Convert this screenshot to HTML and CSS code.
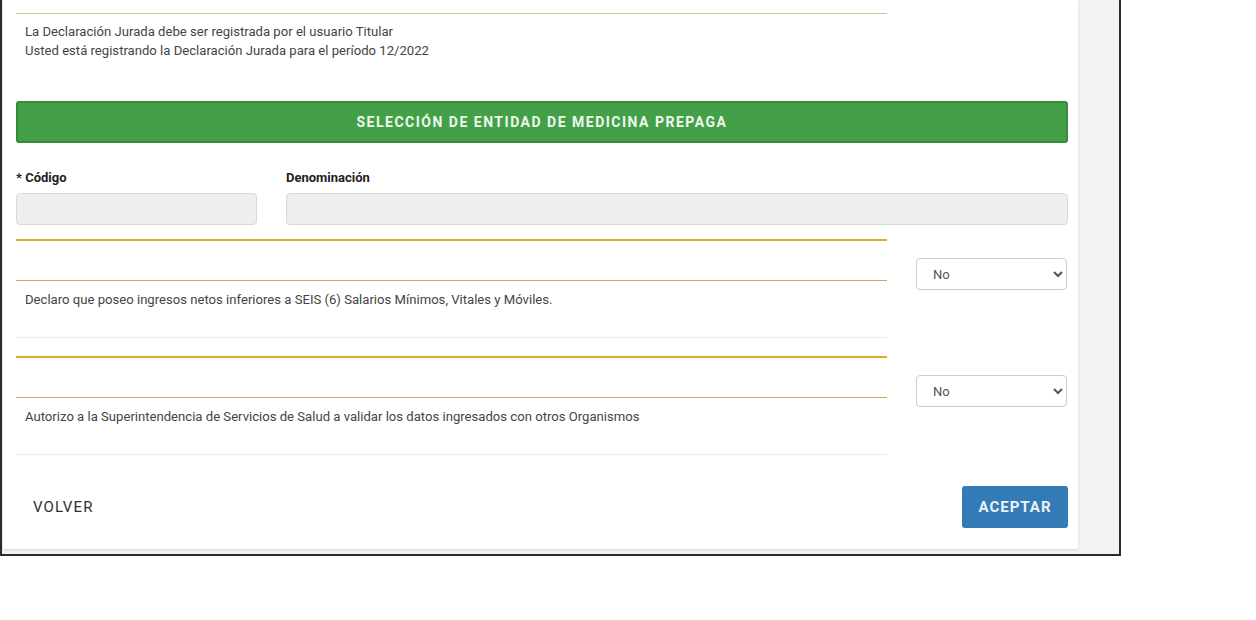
FILE: index.html
```html
<!DOCTYPE html>
<html lang="es">
<head>
<meta charset="utf-8">
<title>Declaración Jurada</title>
<link rel="stylesheet" href="styles.css">
</head>
<body>
<div class="frame">
  <div class="card">
    <div class="intro">
      <p>La Declaración Jurada debe ser registrada por el usuario Titular</p>
      <p>Usted está registrando la Declaración Jurada para el período 12/2022</p>
    </div>

    <div class="banner">SELECCIÓN DE ENTIDAD DE MEDICINA PREPAGA</div>

    <div class="fields">
      <div class="field">
        <label class="label">* Código</label>
        <input class="input" type="text" disabled>
      </div>
      <div class="field">
        <label class="label">Denominación</label>
        <input class="input" type="text" disabled>
      </div>
    </div>

    <div class="decl">
      <div class="decl-text">
        <div class="decl-head"></div>
        <p class="decl-body">Declaro que poseo ingresos netos inferiores a SEIS (6) Salarios Mínimos, Vitales y Móviles.</p>
      </div>
      <div class="decl-select">
        <select class="select"><option>No</option><option>Si</option></select>
      </div>
    </div>

    <div class="decl">
      <div class="decl-text">
        <div class="decl-head"></div>
        <p class="decl-body">Autorizo a la Superintendencia de Servicios de Salud a validar los datos ingresados con otros Organismos</p>
      </div>
      <div class="decl-select">
        <select class="select"><option>No</option><option>Si</option></select>
      </div>
    </div>

    <div class="actions">
      <button class="btn-link" type="button">VOLVER</button>
      <button class="btn-primary" type="button">ACEPTAR</button>
    </div>
  </div>
</div>
</body>
</html>
```

FILE: styles.css
```css
* { box-sizing: border-box; }

html, body {
  margin: 0;
  padding: 0;
  background: #ffffff;
  font-family: Roboto, "Liberation Sans", Arial, sans-serif;
}

.frame {
  width: 1121px;
  border: 2px solid #2b2b2b;
  border-top: none;
  background: #f1f2f4;
  padding: 0 41px 5px 1px;
}

.card {
  background: #ffffff;
  padding: 13px 10px 21px 13px;
  box-shadow: 0 1px 2px rgba(0, 0, 0, 0.12);
}

.intro {
  width: 871px;
  border-top: 1px solid #d8c38c;
  padding: 8px 0 0 9px;
}

.intro p {
  margin: 0;
  font-size: 13.12px;
  line-height: 19px;
  color: #444444;
}

.banner {
  margin-top: 41px;
  height: 42px;
  background: #43a047;
  border: 2px solid #3a8a3e;
  border-radius: 3px;
  color: #eef7ee;
  font-weight: 700;
  font-size: 14px;
  letter-spacing: 1.5px;
  display: flex;
  align-items: center;
  justify-content: center;
}

.fields {
  margin-top: 26px;
  display: grid;
  grid-template-columns: 241px 1fr;
  column-gap: 29px;
}

.field {
  display: flex;
  flex-direction: column;
}

.label {
  font-size: 13px;
  line-height: 18px;
  font-weight: 700;
  color: #222222;
  margin-bottom: 6px;
}

.input {
  height: 32px;
  background: #eeeeee;
  border: 1px solid #d9d9d9;
  border-radius: 4px;
  font-family: inherit;
}

.decl {
  display: grid;
  grid-template-columns: 871px 151px;
  column-gap: 29px;
  margin-top: 14px;
}

.decl + .decl {
  margin-top: 18px;
}

.decl-text {
  border-top: 2px solid #e1a930;
  border-bottom: 1px solid #ececec;
}

.decl-head {
  height: 40px;
  border-bottom: 1px solid #cda85a;
}

.decl-body {
  margin: 0;
  padding: 9px 0 28px 9px;
  font-size: 13.12px;
  line-height: 19px;
  color: #444444;
}

.decl-select {
  padding-top: 19px;
}

.select {
  width: 151px;
  height: 32px;
  border: 1px solid #cccccc;
  border-radius: 4px;
  background: #ffffff;
  color: #555555;
  font-family: inherit;
  font-size: 13px;
  padding-left: 12px;
}

.actions {
  margin-top: 31px;
  display: flex;
  justify-content: space-between;
  align-items: center;
}

.btn-link {
  background: none;
  border: none;
  padding: 0 0 0 17px;
  font-family: inherit;
  font-size: 15px;
  font-weight: 400;
  letter-spacing: 1.1px;
  color: #2f2f2f;
  height: 42px;
}

.btn-primary {
  width: 106px;
  height: 42px;
  background: #337ab7;
  border: none;
  border-radius: 3px;
  color: #eaf2fa;
  font-family: inherit;
  font-size: 15px;
  font-weight: 700;
  letter-spacing: 1px;
}
```
